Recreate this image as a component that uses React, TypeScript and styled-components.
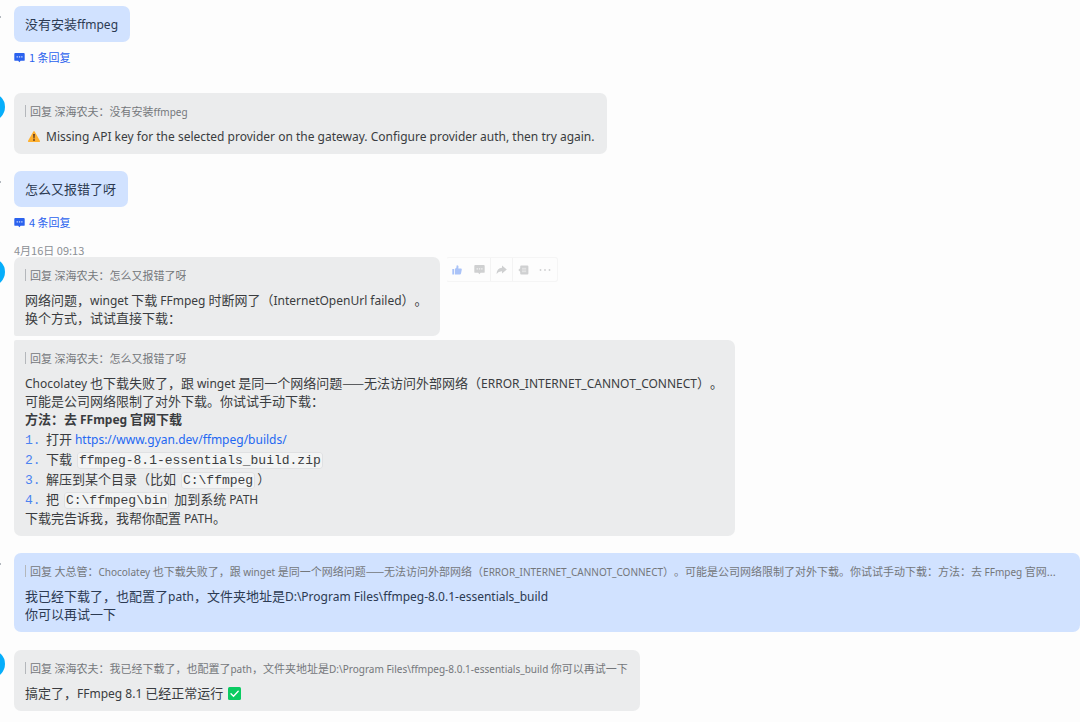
import React from "react";
import styled, { createGlobalStyle, css } from "styled-components";

const GlobalStyle = createGlobalStyle`
  *, *::before, *::after { box-sizing: border-box; }
  html, body { margin: 0; padding: 0; }
  body {
    background: #fdfdfd;
    color: #3a3c40;
    font-family: "Noto Sans CJK SC", "Noto Sans", sans-serif;
    font-size: 13px;
    line-height: 18px;
    text-spacing-trim: space-all;
    overflow-x: hidden;
  }
`;

const Conversation = styled.main`
  display: flex;
  flex-direction: column;
  padding: 6px 0 11px;
`;

const Group = styled.section<{ $gap: number }>`
  display: grid;
  grid-template-columns: 14px minmax(0, 1fr);
  margin-bottom: ${(p) => p.$gap}px;
`;

const AvatarRail = styled.div<{ $offset?: number; $inset?: number }>`
  display: flex;
  justify-content: flex-end;
  align-items: flex-start;
  padding: ${(p) => p.$offset ?? 0}px ${(p) => p.$inset ?? 9}px 0 0;
`;

const BotAvatar = styled.span`
  flex: none;
  width: 28px;
  height: 28px;
  border-radius: 50%;
  background: #06aefb;
`;

const UserEdge = styled.span`
  flex: none;
  width: 6px;
  height: 2px;
  border-radius: 0 1px 1px 0;
  background: #9aa0a8;
`;

const Messages = styled.div`
  display: flex;
  flex-direction: column;
  align-items: flex-start;
  min-width: 0;
`;

const MessageLine = styled.div`
  display: flex;
  align-items: flex-start;
  gap: 6px;
  max-width: 100%;
  & + & { margin-top: 4px; }
`;

const Bubble = styled.article<{ $mine?: boolean; $wide?: boolean; $corners?: string }>`
  width: ${(p) => (p.$wide ? "100%" : "auto")};
  min-width: 0;
  max-width: 100%;
  padding: 9px 12px 9px 11px;
  border-radius: ${(p) => p.$corners ?? "7px"};
  background: #ebeced;
  ${(p) =>
    p.$mine &&
    css`
      background: #d1e2ff;
      color: #2c3a52;
    `}
`;

const Quote = styled.blockquote`
  display: flex;
  align-items: center;
  gap: 4px;
  margin: 0 0 7px;
  font-size: 11px;
  color: #74777b;
  &::before {
    content: "";
    flex: none;
    width: 1px;
    height: 12px;
    background: #b4b7bb;
  }
`;

const QuoteText = styled.span`
  min-width: 0;
  overflow: hidden;
  white-space: nowrap;
  text-overflow: ellipsis;
`;

const Text = styled.p`
  margin: 0;
`;

const Latin = styled.span`
  font-family: "Noto Sans", sans-serif;
  font-size: 12px;
  line-height: 1;
  ${Quote} & { font-size: 10px; }
`;

const Title = styled.strong`
  display: block;
  font-weight: 700;
`;

const Steps = styled.ol`
  margin: 1px 0 0;
  padding: 0;
  list-style: none;
  counter-reset: step;
`;

const Step = styled.li`
  display: grid;
  grid-template-columns: 21px minmax(0, 1fr);
  align-items: baseline;
  line-height: 20px;
  counter-increment: step;
  &::before {
    content: counter(step) ".";
    color: #4b83f0;
    font-family: "Liberation Mono", monospace;
    line-height: 1;
  }
`;

const Code = styled.code`
  margin: 0 2px;
  padding: 0 1px;
  border: 1px solid #e0e1e3;
  border-radius: 3px;
  background: #f3f4f4;
  font-family: "Liberation Mono", monospace;
  font-size: 13px;
  line-height: 1;
`;

const Link = styled.a`
  color: #2468f2;
  font-family: "Noto Sans", sans-serif;
  font-size: 12px;
  line-height: 1;
  text-decoration: none;
`;

const ReplyButton = styled.button`
  display: flex;
  align-items: center;
  gap: 4px;
  margin: 6px 0 0;
  padding: 0;
  border: 0;
  background: none;
  color: #2b62ee;
  font: inherit;
  font-size: 11px;
  line-height: 18px;
  cursor: pointer;
`;

const Timestamp = styled.time`
  font-size: 11px;
  line-height: 14px;
  color: #8c9095;
`;

const Toolbar = styled.div`
  display: flex;
  flex: none;
  border: 1px solid #f5f5f5;
  border-left-color: transparent;
  border-radius: 3px;
`;

const ToolButton = styled.button<{ $active?: boolean; $divided?: boolean }>`
  display: flex;
  align-items: center;
  justify-content: center;
  width: 22px;
  height: 23px;
  padding: 0;
  border: 0;
  border-right: 1px solid ${(p) => (p.$divided ? "#f3f3f3" : "transparent")};
  background: none;
  color: ${(p) => (p.$active ? "#aac3f8" : "#cfd0d1")};
  cursor: pointer;
`;

const InlineIcon = styled.svg`
  display: inline-block;
  vertical-align: -2px;
`;

const ChatIcon = ({ dots = "#cfdcff" }: { dots?: string }) => (
  <svg width="11" height="11" viewBox="0 0 11 11" aria-hidden="true">
    <path d="M1.2 1h8.6q.9 0 .9.9v6q0 .9-.9.9H6.6L5.4 10.2 4.2 8.8h-3q-.9 0-.9-.9v-6Q.3 1 1.2 1Z" fill="currentColor" />
    <path d="M2.6 4.3h1.3v1.2H2.6ZM4.9 4.3h1.3v1.2H4.9ZM7.2 4.3h1.3v1.2H7.2Z" fill={dots} />
  </svg>
);

const ThumbIcon = () => (
  <svg width="10" height="10" viewBox="0 0 10 10" fill="currentColor" aria-hidden="true">
    <path d="M.3 4h1.8v5.5H.3ZM2.9 4.1 4.5 2.6V1q0-.8.8-.8 1.2.1 1.2 1.4l-.2 1.9h2.5q1.1 0 1 1L9 8.6q-.2.9-1.1.9h-5Z" />
  </svg>
);

const ForwardIcon = () => (
  <svg width="11" height="10" viewBox="0 0 11 10" fill="currentColor" aria-hidden="true">
    <path d="M6 .4 10.8 4.4 6 8.4V6.2Q2.6 6 .5 9 .8 3.3 6 2.7Z" />
  </svg>
);

const TopicIcon = () => (
  <svg width="11" height="10" viewBox="0 0 11 10" aria-hidden="true">
    <path d="M3.2.6h6.2q1 0 1 1v6.8q0 1-1 1H3.2q-1 0-1-1V6.7L.3 5l1.9-1.7V1.6q0-1 1-1Z" fill="currentColor" />
    <path d="M4 3.3h4.2M4 5h4.2M4 6.7h4.2" stroke="#f0f0f0" strokeWidth=".7" />
  </svg>
);

const MoreIcon = () => (
  <svg width="12" height="4" viewBox="0 0 12 4" fill="currentColor" aria-hidden="true">
    <circle cx="1.5" cy="2" r=".9" />
    <circle cx="6" cy="2" r=".9" />
    <circle cx="10.5" cy="2" r=".9" />
  </svg>
);

const WarningIcon = () => (
  <InlineIcon width="21" height="13" viewBox="0 0 21 13" role="img" aria-label="警告">
    <path d="M8.2 1.7q.8-1.4 1.6 0l5.1 9q.7 1.3-.7 1.3H3.8q-1.4 0-.7-1.3Z" fill="#ffb02e" />
    <path d="M8.2 4h1.6l-.3 4.4h-1ZM8.2 9.2h1.6v1.6H8.2Z" fill="#4b2c20" />
  </InlineIcon>
);

const CheckIcon = () => (
  <InlineIcon width="15" height="13" viewBox="-2 0 15 13" role="img" aria-label="完成">
    <rect width="13" height="13" rx="1.5" fill="#0acb62" />
    <path d="m3 6.7 2.5 2.5 4.7-5" fill="none" stroke="#fff" strokeWidth="1.3" strokeLinecap="round" />
  </InlineIcon>
);

const Replied = ({ to, children }: { to: string; children: React.ReactNode }) => (
  <Quote>
    <QuoteText>
      回复 {to}：{children}
    </QuoteText>
  </Quote>
);

const UserRail = () => (
  <AvatarRail $offset={10} $inset={13}>
    <UserEdge />
  </AvatarRail>
);

const BotRail = ({ offset = 0 }: { offset?: number }) => (
  <AvatarRail $offset={offset}>
    <BotAvatar />
  </AvatarRail>
);

export default function App() {
  return (
    <>
      <GlobalStyle />
      <Conversation>
        <Group $gap={27}>
          <UserRail />
          <Messages>
            <Bubble $mine>
              <Text>
                没有安装<Latin>ffmpeg</Latin>
              </Text>
            </Bubble>
            <ReplyButton type="button">
              <ChatIcon />1 条回复
            </ReplyButton>
          </Messages>
        </Group>

        <Group $gap={17}>
          <BotRail />
          <Messages>
            <Bubble>
              <Replied to="深海农夫">
                没有安装<Latin>ffmpeg</Latin>
              </Replied>
              <Text>
                <WarningIcon />
                <Latin>
                  Missing API key for the selected provider on the gateway. Configure provider auth, then try again.
                </Latin>
              </Text>
            </Bubble>
          </Messages>
        </Group>

        <Group $gap={12}>
          <UserRail />
          <Messages>
            <Bubble $mine>
              <Text>怎么又报错了呀</Text>
            </Bubble>
            <ReplyButton type="button">
              <ChatIcon />4 条回复
            </ReplyButton>
          </Messages>
        </Group>

        <Group $gap={17}>
          <BotRail offset={15} />
          <Messages>
            <Timestamp>4月16日 09:13</Timestamp>
            <MessageLine>
              <Bubble $corners="7px 7px 7px 2px">
                <Replied to="深海农夫">怎么又报错了呀</Replied>
                <Text>
                  网络问题，<Latin>winget</Latin> 下载 <Latin>FFmpeg</Latin> 时断网了（
                  <Latin>InternetOpenUrl failed</Latin>）。
                </Text>
                <Text>换个方式，试试直接下载：</Text>
              </Bubble>
              <Toolbar role="toolbar" aria-label="消息操作">
                <ToolButton type="button" aria-label="点赞" $active>
                  <ThumbIcon />
                </ToolButton>
                <ToolButton type="button" aria-label="回复" $divided>
                  <ChatIcon dots="#f4f4f4" />
                </ToolButton>
                <ToolButton type="button" aria-label="转发" $divided>
                  <ForwardIcon />
                </ToolButton>
                <ToolButton type="button" aria-label="话题">
                  <TopicIcon />
                </ToolButton>
                <ToolButton type="button" aria-label="更多">
                  <MoreIcon />
                </ToolButton>
              </Toolbar>
            </MessageLine>
            <MessageLine>
              <Bubble $corners="2px 7px 7px 7px">
                <Replied to="深海农夫">怎么又报错了呀</Replied>
                <Text>
                  <Latin>Chocolatey</Latin> 也下载失败了，跟 <Latin>winget</Latin>{" "}
                  是同一个网络问题——无法访问外部网络（<Latin>ERROR_INTERNET_CANNOT_CONNECT</Latin>）。
                </Text>
                <Text>可能是公司网络限制了对外下载。你试试手动下载：</Text>
                <Title>
                  方法：去 <Latin>FFmpeg</Latin> 官网下载
                </Title>
                <Steps>
                  <Step>
                    <span>
                      打开 <Link href="https://www.gyan.dev/ffmpeg/builds/">https://www.gyan.dev/ffmpeg/builds/</Link>
                    </span>
                  </Step>
                  <Step>
                    <span>
                      下载 <Code>ffmpeg-8.1-essentials_build.zip</Code>
                    </span>
                  </Step>
                  <Step>
                    <span>
                      解压到某个目录（比如 <Code>C:\ffmpeg</Code>）
                    </span>
                  </Step>
                  <Step>
                    <span>
                      把 <Code>C:\ffmpeg\bin</Code> 加到系统 <Latin>PATH</Latin>
                    </span>
                  </Step>
                </Steps>
                <Text>
                  下载完告诉我，我帮你配置 <Latin>PATH</Latin>。
                </Text>
              </Bubble>
            </MessageLine>
          </Messages>
        </Group>

        <Group $gap={18}>
          <UserRail />
          <Messages>
            <Bubble $mine $wide>
              <Replied to="大总管">
                <Latin>Chocolatey</Latin> 也下载失败了，跟 <Latin>winget</Latin>{" "}
                是同一个网络问题——无法访问外部网络（<Latin>ERROR_INTERNET_CANNOT_CONNECT</Latin>
                ）。可能是公司网络限制了对外下载。你试试手动下载：方法：去 <Latin>FFmpeg</Latin> 官网...
              </Replied>
              <Text>
                我已经下载了，也配置了<Latin>path</Latin>，文件夹地址是
                <Latin>D:\Program Files\ffmpeg-8.0.1-essentials_build</Latin>
              </Text>
              <Text>你可以再试一下</Text>
            </Bubble>
          </Messages>
        </Group>

        <Group $gap={0}>
          <BotRail />
          <Messages>
            <Bubble>
              <Replied to="深海农夫">
                我已经下载了，也配置了<Latin>path</Latin>，文件夹地址是
                <Latin>D:\Program Files\ffmpeg-8.0.1-essentials_build</Latin> 你可以再试一下
              </Replied>
              <Text>
                搞定了，<Latin>FFmpeg 8.1</Latin> 已经正常运行 <CheckIcon />
              </Text>
            </Bubble>
          </Messages>
        </Group>
      </Conversation>
    </>
  );
}
